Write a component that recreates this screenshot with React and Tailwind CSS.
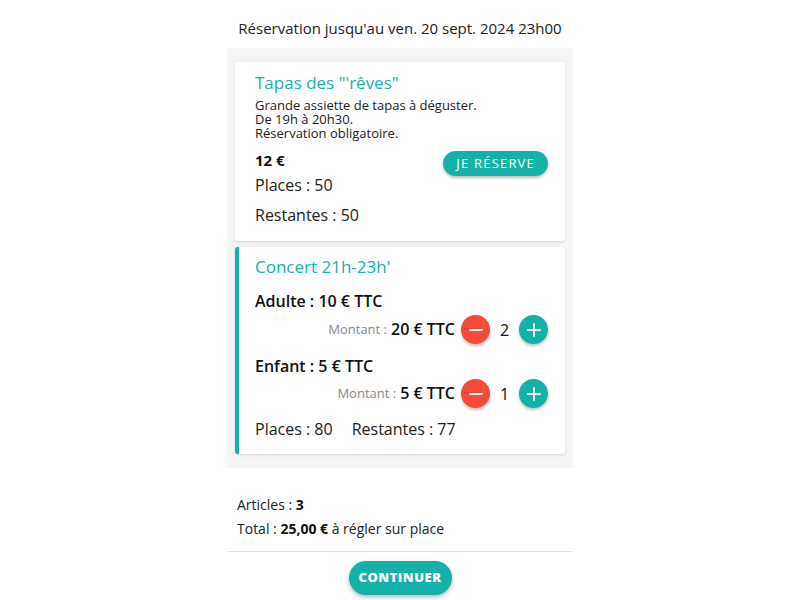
import React from "react";

const font = { fontFamily: '"Open Sans", "Noto Sans", sans-serif' };

function Circle({ kind }) {
  const red = kind === "minus";
  return (
    <button
      className={
        "w-[29px] h-[29px] rounded-full flex items-center justify-center shadow-[0_2px_3px_rgba(0,0,0,0.25)] " +
        (red ? "bg-[#f44b3b]" : "bg-[#14b1a8]")
      }
    >
      <svg width="16" height="16" viewBox="0 0 16 16">
        <path d="M2 8h12" stroke="white" strokeWidth="1.8" strokeLinecap="round" />
        {!red && <path d="M8 2v12" stroke="white" strokeWidth="1.8" strokeLinecap="round" />}
      </svg>
    </button>
  );
}

function Row({ label, amount, qty, gapTop, rowTop }) {
  return (
    <>
      <div className={"text-[16px] font-semibold text-[#111] leading-[20px] " + gapTop}>{label}</div>
      <div className={"flex items-center justify-end h-[29px] " + rowTop}>
        <span className="text-[13px] text-[#888] mr-[4px] mt-[1px]">Montant :</span>
        <span className="text-[16px] font-semibold text-[#111] mr-[6px] -mt-[1px]">{amount}</span>
        <Circle kind="minus" />
        <span className="w-[29px] text-center text-[16px] text-[#111]">{qty}</span>
        <Circle kind="plus" />
      </div>
    </>
  );
}

export default function App() {
  return (
    <div className="w-[800px] h-[600px] bg-white overflow-hidden text-[#222]" style={font}>
      <div className="h-[48px] flex items-center justify-center pt-[8px] text-[15px] text-[#222]">
        Réservation jusqu'au ven. 20 sept. 2024 23h00
      </div>
      <div className="mx-auto w-[346px] bg-[#f5f5f5] px-[8px] py-[14px] flex flex-col gap-[6px]">
        <div className="bg-white rounded-[3px] shadow-[0_1px_3px_rgba(0,0,0,0.12)] h-[179px] pl-[20px] pr-[17px] pt-[10px]">
          <div className="text-[17px] text-[#14b1a8] leading-[22px]">Tapas des "'rêves"</div>
          <div className="text-[13px] leading-[14px] mt-[4px] text-[#222]">
            <div>Grande assiette de tapas à déguster.</div>
            <div>De 19h à 20h30.</div>
            <div>Réservation obligatoire.</div>
          </div>
          <div className="flex items-start justify-between mt-[10px]">
            <div>
              <div className="text-[15px] font-bold leading-[20px] text-[#111]">12 €</div>
              <div className="text-[16px] leading-[22px] mt-[4px]">Places : 50</div>
              <div className="text-[16px] leading-[22px] mt-[8px]">Restantes : 50</div>
            </div>
            <button className="mt-[1px] h-[25px] px-[13px] rounded-full bg-[#14b1a8] text-white text-[13px] tracking-[1.2px] shadow-[0_2px_3px_rgba(0,0,0,0.25)]">
              JE RÉSERVE
            </button>
          </div>
        </div>
        <div className="bg-white rounded-[3px] shadow-[0_1px_3px_rgba(0,0,0,0.12)] h-[207px] border-l-[4px] border-[#14b1a8] pl-[16px] pr-[17px] pt-[9px]">
          <div className="text-[17px] text-[#14b1a8] leading-[22px]">Concert 21h-23h'</div>
          <Row label="Adulte : 10 € TTC" amount="20 € TTC" qty="2" gapTop="mt-[13px]" rowTop="mt-[4px]" />
          <Row label="Enfant : 5 € TTC" amount="5 € TTC" qty="1" gapTop="mt-[12px]" rowTop="mt-[3px]" />
          <div className="flex gap-[19px] text-[16px] leading-[22px] mt-[10px]">
            <span>Places : 80</span>
            <span>Restantes : 77</span>
          </div>
        </div>
      </div>
      <div className="mx-auto w-[346px] px-[10px] pt-[27px] text-[14px] leading-[20px] text-[#222]">
        <div>
          Articles : <span className="font-bold text-[#111]">3</span>
        </div>
        <div className="mt-[4px]">
          Total : <span className="font-bold text-[#111]">25,00 €</span> à régler sur place
        </div>
      </div>
      <div className="mx-auto w-[346px] mt-[12px] border-t border-[#e4e4e4] flex justify-center pt-[9px]">
        <button className="h-[34px] w-[103px] rounded-full bg-[#14b1a8] text-white text-[13px] font-black tracking-[0.5px] shadow-[0_2px_4px_rgba(0,0,0,0.3)]">
          CONTINUER
        </button>
      </div>
    </div>
  );
}
